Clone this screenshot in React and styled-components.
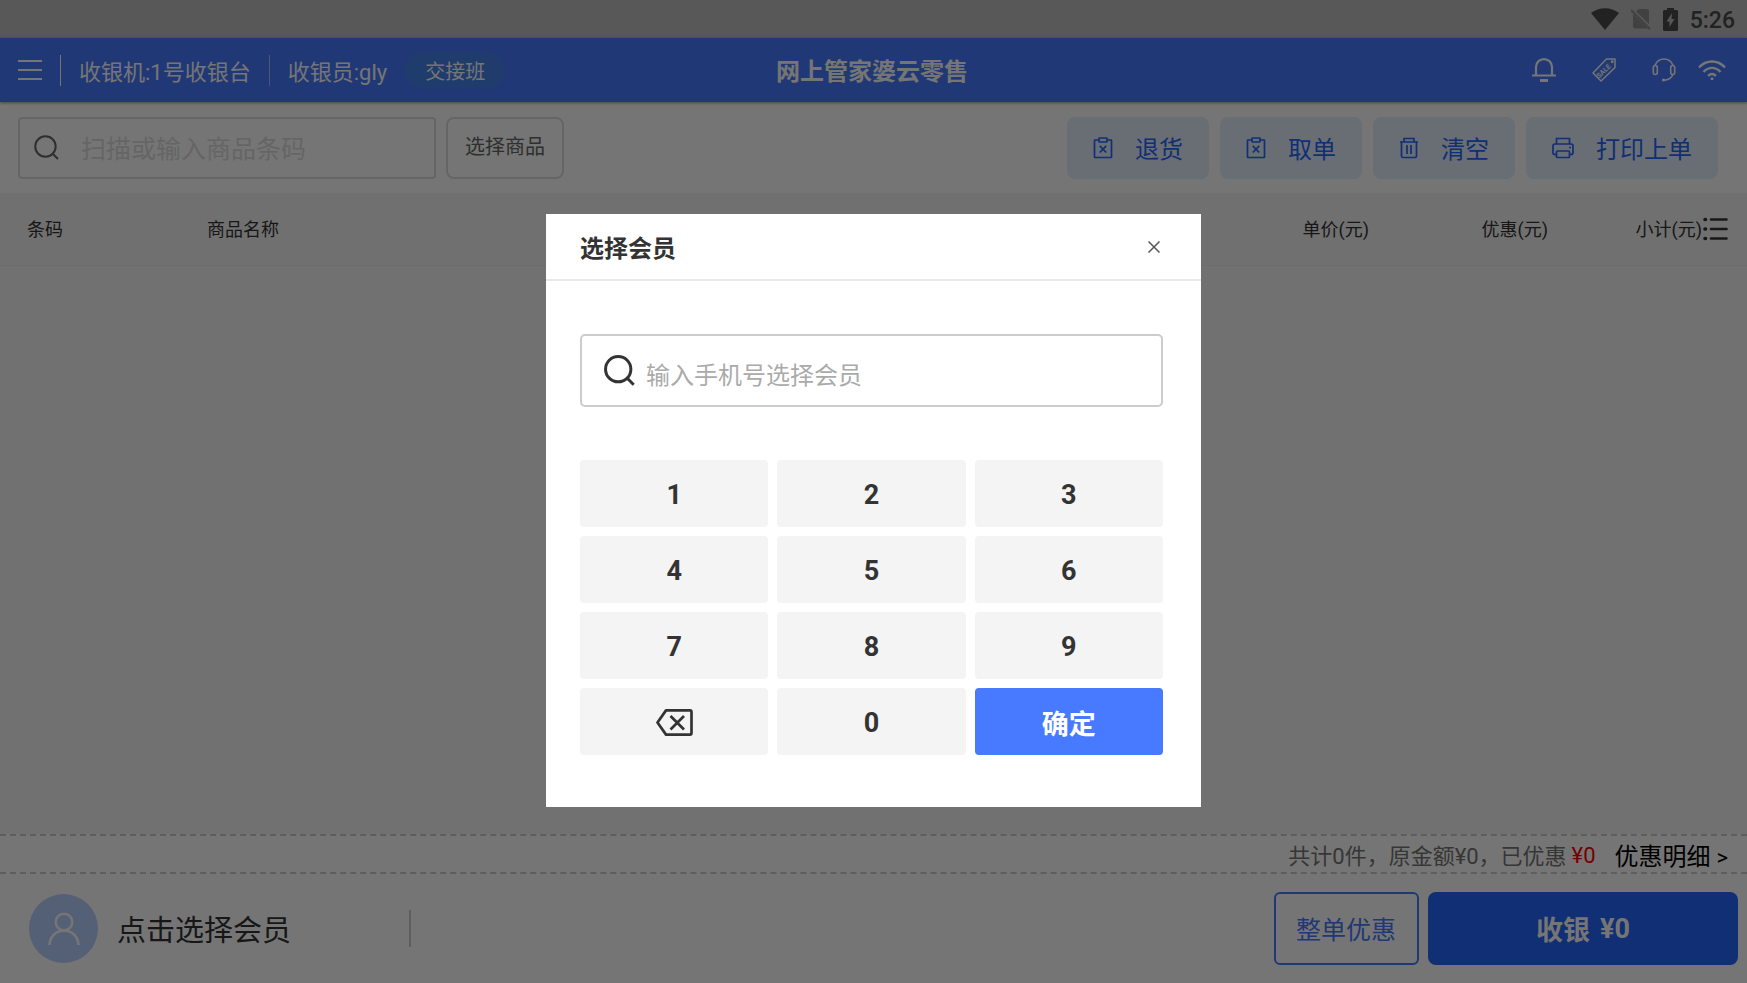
import { useState } from "react";
import styled, { createGlobalStyle } from "styled-components";

const KEYS = ["1", "2", "3", "4", "5", "6", "7", "8", "9"];

function App() {
  const [showMember, setShowMember] = useState(true);
  const [phone, setPhone] = useState("");

  const handleKey = (key) => {
    setPhone(phone + key);
  };

  const handleDelete = () => {
    setPhone(phone.slice(0, -1));
  };

  const handleClose = () => {
    setShowMember(false);
  };

  return (
    <Page>
      <GlobalStyle />
      <StatusBar>
        <SignalIcon />
        <NoSimIcon />
        <BatteryIcon />
        <Clock>5:26</Clock>
      </StatusBar>

      <Header>
        <HeaderLeft>
          <IconButton aria-label="菜单">
            <MenuIcon />
          </IconButton>
          <Divider />
          <span>收银机:1号收银台</span>
          <Divider $dim />
          <span>收银员:gly</span>
          <ShiftButton>交接班</ShiftButton>
        </HeaderLeft>
        <Title>网上管家婆云零售</Title>
        <HeaderRight>
          <IconButton aria-label="通知"><BellIcon /></IconButton>
          <IconButton aria-label="促销"><SaleIcon /></IconButton>
          <HeaderPair>
            <IconButton aria-label="客服"><HeadsetIcon /></IconButton>
            <IconButton aria-label="网络"><WifiIcon /></IconButton>
          </HeaderPair>
        </HeaderRight>
      </Header>

      <Toolbar>
        <SearchBox>
          <SearchIcon size={25} width={2} color="#666" />
          <SearchInput type="text" aria-label="商品条码" placeholder="扫描或输入商品条码" />
        </SearchBox>
        <PickButton>选择商品</PickButton>
        <Actions>
          <ActionButton><OrderIcon />退货</ActionButton>
          <ActionButton><OrderIcon />取单</ActionButton>
          <ActionButton><TrashIcon />清空</ActionButton>
          <ActionButton><PrinterIcon />打印上单</ActionButton>
        </Actions>
      </Toolbar>

      <TableBar>
        <GoodsTable>
          <thead>
            <tr>
              <Th $width="180px">条码</Th>
              <Th>商品名称</Th>
              <Th $width="179px" $right>单价(元)</Th>
              <Th $width="179px" $right>优惠(元)</Th>
              <Th $width="137px" $last>小计(元)</Th>
            </tr>
          </thead>
        </GoodsTable>
        <IconButton aria-label="列设置"><ListIcon /></IconButton>
      </TableBar>
      <GoodsArea />

      <Summary>
        <span>共计0件，原金额¥0，已优惠</span>
        <Discount>¥0</Discount>
        <DetailButton>优惠明细 <small>&gt;</small></DetailButton>
      </Summary>

      <Footer>
        <MemberButton onClick={() => setShowMember(true)}>
          <Avatar><UserIcon /></Avatar>
          <MemberName>点击选择会员</MemberName>
        </MemberButton>
        <FooterDivider />
        <FooterActions>
          <DiscountButton>整单优惠</DiscountButton>
          <PayButton><span>收银</span><span>¥0</span></PayButton>
        </FooterActions>
      </Footer>

      {showMember && (
        <Mask>
          <Modal role="dialog" aria-labelledby="member-title">
            <ModalHeader>
              <ModalTitle id="member-title">选择会员</ModalTitle>
              <IconButton aria-label="关闭" onClick={handleClose}><CloseIcon /></IconButton>
            </ModalHeader>
            <ModalBody>
              <PhoneBox>
                <SearchIcon size={31} width={3} color="#333" />
                <PhoneInput
                  type="text"
                  aria-label="手机号"
                  placeholder="输入手机号选择会员"
                  value={phone}
                  onChange={(e) => setPhone(e.target.value)}
                />
              </PhoneBox>
              <Keypad>
                {KEYS.map((key) => (
                  <Key key={key} onClick={() => handleKey(key)}>{key}</Key>
                ))}
                <Key aria-label="删除" onClick={handleDelete}><DeleteIcon /></Key>
                <Key onClick={() => handleKey("0")}>0</Key>
                <Key $primary onClick={handleClose}>确定</Key>
              </Keypad>
            </ModalBody>
          </Modal>
        </Mask>
      )}
    </Page>
  );
}

export default App;

const SignalIcon = () => (
  <svg width="28" height="22" viewBox="0 0 28 22">
    <path d="M14 22 L0 5 C8 -1.5 20 -1.5 28 5 Z" fill="#4a4a4a" />
  </svg>
);

const NoSimIcon = () => (
  <svg width="20" height="22" viewBox="0 0 20 22">
    <path d="M8 1 H16 Q18 1 18 3 V16 L5 3.5 Z M2 6 L17 20.5 H4 Q2 20.5 2 18.5 Z" fill="#8f8f8f" />
    <path d="M0 2 L19 21" stroke="#8f8f8f" strokeWidth="2" />
  </svg>
);

const BatteryIcon = () => (
  <svg width="15" height="23" viewBox="0 0 15 23">
    <path d="M4 0 H11 V2 H13.5 Q15 2 15 3.5 V21.5 Q15 23 13.5 23 H1.5 Q0 23 0 21.5 V3.5 Q0 2 1.5 2 H4 Z" fill="#4a4a4a" />
    <path d="M9 5 L3.5 13.5 H6.5 V19 L11.5 11 H8.5 Z" fill="#bfbfbf" />
  </svg>
);

const MenuIcon = () => (
  <svg width="24" height="22" viewBox="0 0 24 22" stroke="currentColor" strokeWidth="2">
    <path d="M0 2 H24 M0 11 H24 M0 20 H24" />
  </svg>
);

const BellIcon = () => (
  <svg width="24" height="24" viewBox="0 0 24 24" fill="none" stroke="currentColor" strokeWidth="2.2">
    <path d="M4 17 V9 C4 4.5 7.5 1.2 12 1.2 C16.5 1.2 20 4.5 20 9 V17 M0 17.5 H24" />
    <path d="M8 22.5 H16" strokeWidth="3" />
  </svg>
);

const SaleIcon = () => (
  <svg width="24" height="24" viewBox="0 0 24 24" fill="none" stroke="currentColor" strokeWidth="1.5">
    <path d="M14.5 1 H23 V9.5 L9 23 L1 15 Z" strokeLinejoin="round" />
    <circle cx="20.2" cy="3.8" r="0.7" />
    <text
      x="11.5"
      y="15.5"
      transform="rotate(-44 11.5 13)"
      fontFamily="Roboto, sans-serif"
      fontSize="7"
      fontWeight="700"
      textAnchor="middle"
      fill="currentColor"
      stroke="none"
    >
      SALE
    </text>
  </svg>
);

const HeadsetIcon = () => (
  <svg width="24" height="24" viewBox="0 0 24 24" fill="none" stroke="currentColor" strokeWidth="1.6">
    <path d="M3 7.5 C4.5 3.5 8 1 12 1 C16 1 19.5 3.5 21 7.5 M21 16.5 C19.5 20 16.5 22 12 22.2" />
    <rect x="1.3" y="7.5" width="4" height="9" rx="2" />
    <rect x="18.7" y="7.5" width="4" height="9" rx="2" />
    <circle cx="11.5" cy="22" r="1.6" fill="currentColor" stroke="none" />
  </svg>
);

const WifiIcon = () => (
  <svg width="28" height="22" viewBox="0 0 28 22" fill="none" stroke="currentColor" strokeWidth="2.4">
    <path d="M1 8.5 C8 0.5 20 0.5 27 8.5 M5.5 13 C10.5 7.5 17.5 7.5 22.5 13 M10 17 C12.5 14.5 15.5 14.5 18 17" />
    <circle cx="14" cy="19.8" r="1.5" fill="currentColor" stroke="none" />
  </svg>
);

const SearchIcon = ({ size, width, color }) => (
  <svg width={size} height={size} viewBox="0 0 24 24" fill="none" stroke={color} strokeWidth={(width * 24) / size}>
    <circle cx="11" cy="11" r="9.8" />
    <path d="M18 18 L23 23" />
  </svg>
);

const OrderIcon = () => (
  <svg width="20" height="22" viewBox="0 0 20 22" fill="none" stroke="currentColor" strokeWidth="1.7">
    <path d="M6 3 H2 Q1.5 3 1.5 3.5 V20 Q1.5 20.5 2 20.5 H18 Q18.5 20.5 18.5 20 V3.5 Q18.5 3 18 3 H14" />
    <rect x="6" y="1" width="8" height="4" rx="0.5" />
    <path d="M6.8 8.8 L13.2 15.5 M13.2 8.8 L6.8 15.5" />
  </svg>
);

const TrashIcon = () => (
  <svg width="20" height="22" viewBox="0 0 20 22" fill="none" stroke="currentColor" strokeWidth="1.7">
    <path d="M1 5 H19 M5 5 V1.5 H15 V5 M2.5 5 V19 Q2.5 20.5 4 20.5 H16 Q17.5 20.5 17.5 19 V5 M8 8 V17 M12 8 V17" />
  </svg>
);

const PrinterIcon = () => (
  <svg width="22" height="22" viewBox="0 0 22 22" fill="none" stroke="currentColor" strokeWidth="1.7">
    <path d="M4.5 7 V1.5 H17.5 V7 M4.5 17.5 H3 Q1 17.5 1 15.5 V9 Q1 7 3 7 H19 Q21 7 21 9 V15.5 Q21 17.5 19 17.5 H17.5" />
    <rect x="4.5" y="14" width="13" height="6.5" rx="1" />
    <path d="M17 10.5 H19" />
  </svg>
);

const ListIcon = () => (
  <svg width="25" height="24" viewBox="0 0 25 24" stroke="#333" strokeWidth="2.6" strokeLinecap="round">
    <path d="M8 2.5 H23.5 M8 12 H23.5 M8 21.5 H23.5" />
    <path d="M2 2.5 H2.5 M2 12 H2.5 M2 21.5 H2.5" strokeWidth="3.6" />
  </svg>
);

const UserIcon = () => (
  <svg width="32" height="34" viewBox="0 0 32 34" fill="none" stroke="#fff" strokeWidth="2.6">
    <circle cx="16" cy="10" r="8.3" />
    <path d="M1.5 33 C2 24 8 18.8 16 18.8 C24 18.8 30 24 30.5 33" />
  </svg>
);

const CloseIcon = () => (
  <svg width="12" height="12" viewBox="0 0 12 12" stroke="#555" strokeWidth="1.5">
    <path d="M0.5 0.5 L11.5 11.5 M11.5 0.5 L0.5 11.5" />
  </svg>
);

const DeleteIcon = () => (
  <svg width="37" height="27" viewBox="0 0 37 27" fill="none" stroke="#333" strokeWidth="2.7" strokeLinejoin="round">
    <path d="M10 1.4 H34 Q35.5 1.4 35.5 3 V24 Q35.5 25.6 34 25.6 H10 L1.5 13.5 Z" />
    <path d="M14.5 7 L28 20.5 M28 7 L14.5 20.5" />
  </svg>
);

const GlobalStyle = createGlobalStyle`
  * {
    box-sizing: border-box;
  }

  body {
    margin: 0;
  }

  body, button, input {
    font-family: Roboto, "Noto Sans CJK SC", sans-serif;
  }

  button {
    padding: 0;
    border: none;
    background: none;
    color: inherit;
    cursor: pointer;
  }

  svg {
    display: block;
    flex-shrink: 0;
  }
`;

const Page = styled.div`
  display: flex;
  flex-direction: column;
  min-height: 100vh;
  background: #fff;
  color: #333;
`;

const StatusBar = styled.div`
  display: flex;
  align-items: center;
  justify-content: flex-end;
  gap: 12px;
  height: 38px;
  padding: 0 12px;
  background: #bfbfbf;
`;

const Clock = styled.span`
  padding-top: 2px;
  font-size: 23px;
  font-weight: 500;
  color: #4a4a4a;
`;

const Header = styled.header`
  display: grid;
  grid-template-columns: 1fr auto 1fr;
  align-items: center;
  height: 64px;
  padding: 0 21px 0 18px;
  background: #477aff;
  color: #fff;
  box-shadow: 0 1px 3px rgba(0, 0, 0, 0.4);
  z-index: 1;
`;

const HeaderLeft = styled.div`
  display: flex;
  align-items: center;
  gap: 18px;
  font-size: 22px;
  white-space: nowrap;
`;

const Divider = styled.span`
  width: 1px;
  height: 31px;
  background: #fff;
  opacity: ${(props) => (props.$dim ? 0.5 : 1)};
`;

const ShiftButton = styled.button`
  height: 36px;
  padding: 0 20px;
  border-radius: 18px;
  background: #4684ee;
  font-size: 20px;
`;

const Title = styled.h1`
  margin: 0;
  padding-bottom: 2px;
  font-size: 24px;
  font-weight: 700;
`;

const HeaderRight = styled.div`
  display: flex;
  align-items: center;
  justify-content: flex-end;
  gap: 36px;
`;

const HeaderPair = styled.div`
  display: flex;
  align-items: center;
  gap: 22px;
`;

const IconButton = styled.button`
  display: flex;
`;

const Toolbar = styled.div`
  display: flex;
  align-items: center;
  gap: 10px;
  height: 91px;
  padding: 0 29px 0 18px;
`;

const SearchBox = styled.label`
  display: flex;
  align-items: center;
  gap: 22px;
  width: 418px;
  height: 62px;
  padding: 0 14px;
  border: 2px solid #ddd;
  border-radius: 4px;
`;

const SearchInput = styled.input`
  flex: 1;
  min-width: 0;
  padding: 4px 0 0;
  border: none;
  outline: none;
  background: none;
  font-size: 25px;

  &::placeholder {
    color: #ddd;
  }
`;

const PickButton = styled.button`
  height: 62px;
  padding: 0 17px 4px;
  border: 2px solid #ddd;
  border-radius: 8px;
  font-size: 20px;
  color: #666;
`;

const Actions = styled.div`
  display: flex;
  gap: 11px;
  margin-left: auto;
`;

const ActionButton = styled.button`
  display: flex;
  align-items: center;
  gap: 22px;
  height: 62px;
  padding: 0 26px;
  border-radius: 8px;
  background: #e4efff;
  font-size: 24px;
  color: #2766ff;
`;

const TableBar = styled.div`
  display: flex;
  align-items: center;
  height: 73px;
  padding-right: 19px;
  border-bottom: 1px solid #eee;
  background: #f5f5f5;
`;

const GoodsTable = styled.table`
  flex: 1;
  table-layout: fixed;
  border-collapse: collapse;
`;

const Th = styled.th`
  width: ${(props) => props.$width || "auto"};
  padding: ${(props) => (props.$last ? "0 1px 2px 0" : props.$right ? "0 18px 2px" : "0 27px 2px")};
  text-align: ${(props) => (props.$right || props.$last ? "right" : "left")};
  font-size: 18px;
  font-weight: 400;
  white-space: nowrap;
`;

const GoodsArea = styled.main`
  flex: 1;
  background: #f7f7f7;
`;

const Summary = styled.div`
  display: flex;
  align-items: center;
  justify-content: flex-end;
  height: 40px;
  padding-right: 19px;
  border-top: 2px dashed #ccc;
  border-bottom: 2px dashed #ccc;
  font-size: 22px;
  color: #777;
`;

const Discount = styled.span`
  margin: 0 19px 0 5px;
  padding-top: 2px;
  color: #f00;
`;

const DetailButton = styled.button`
  font-size: 24px;
  color: #000;

  small {
    font-size: 22px;
  }
`;

const Footer = styled.footer`
  display: flex;
  align-items: center;
  height: 109px;
  padding: 0 9px 0 29px;
`;

const MemberButton = styled.button`
  display: flex;
  align-items: center;
  gap: 19px;
  font-size: 29px;
`;

const MemberName = styled.span`
  padding-bottom: 2px;
`;

const Avatar = styled.span`
  display: flex;
  align-items: center;
  justify-content: center;
  width: 69px;
  height: 69px;
  border-radius: 50%;
  background: #b8d2ff;
`;

const FooterDivider = styled.span`
  width: 2px;
  height: 37px;
  margin-left: 118px;
  background: #ccc;
`;

const FooterActions = styled.div`
  display: flex;
  gap: 9px;
  margin-left: auto;
`;

const DiscountButton = styled.button`
  height: 73px;
  padding: 0 21px 2px 20px;
  border: 2px solid #477aff;
  border-radius: 6px;
  font-size: 25px;
  color: #477aff;
`;

const PayButton = styled.button`
  display: flex;
  align-items: center;
  justify-content: center;
  gap: 10px;
  width: 310px;
  height: 73px;
  border-radius: 8px;
  background: #2766ff;
  font-size: 27px;
  font-weight: 700;
  color: #fff;
`;

const Mask = styled.div`
  position: fixed;
  inset: 0;
  z-index: 10;
  display: flex;
  align-items: center;
  justify-content: center;
  padding-top: 38px;
  background: rgba(0, 0, 0, 0.54);
`;

const Modal = styled.div`
  width: 655px;
  background: #fff;
`;

const ModalHeader = styled.div`
  display: flex;
  align-items: center;
  justify-content: space-between;
  height: 67px;
  padding: 0 41px 0 34px;
  border-bottom: 2px solid #e8e8e8;
`;

const ModalTitle = styled.h2`
  margin: 0;
  font-size: 24px;
  font-weight: 700;
`;

const ModalBody = styled.div`
  padding: 53px 38px 52px 34px;
`;

const PhoneBox = styled.label`
  display: flex;
  align-items: center;
  gap: 11px;
  height: 73px;
  margin-bottom: 53px;
  padding: 0 22px;
  border: 2px solid #ccc;
  border-radius: 5px;
`;

const PhoneInput = styled.input`
  flex: 1;
  min-width: 0;
  padding: 10px 0 0;
  border: none;
  outline: none;
  font-size: 24px;
  color: #333;

  &::placeholder {
    color: #aaa;
  }
`;

const Keypad = styled.div`
  display: grid;
  grid-template-columns: repeat(3, 1fr);
  gap: 9px;
`;

const Key = styled.button`
  display: flex;
  align-items: center;
  justify-content: center;
  height: 67px;
  padding-top: 2px;
  border-radius: 4px;
  background: ${(props) => (props.$primary ? "#477aff" : "#f4f4f4")};
  font-size: 27px;
  font-weight: 700;
  color: ${(props) => (props.$primary ? "#fff" : "#333")};
`;
